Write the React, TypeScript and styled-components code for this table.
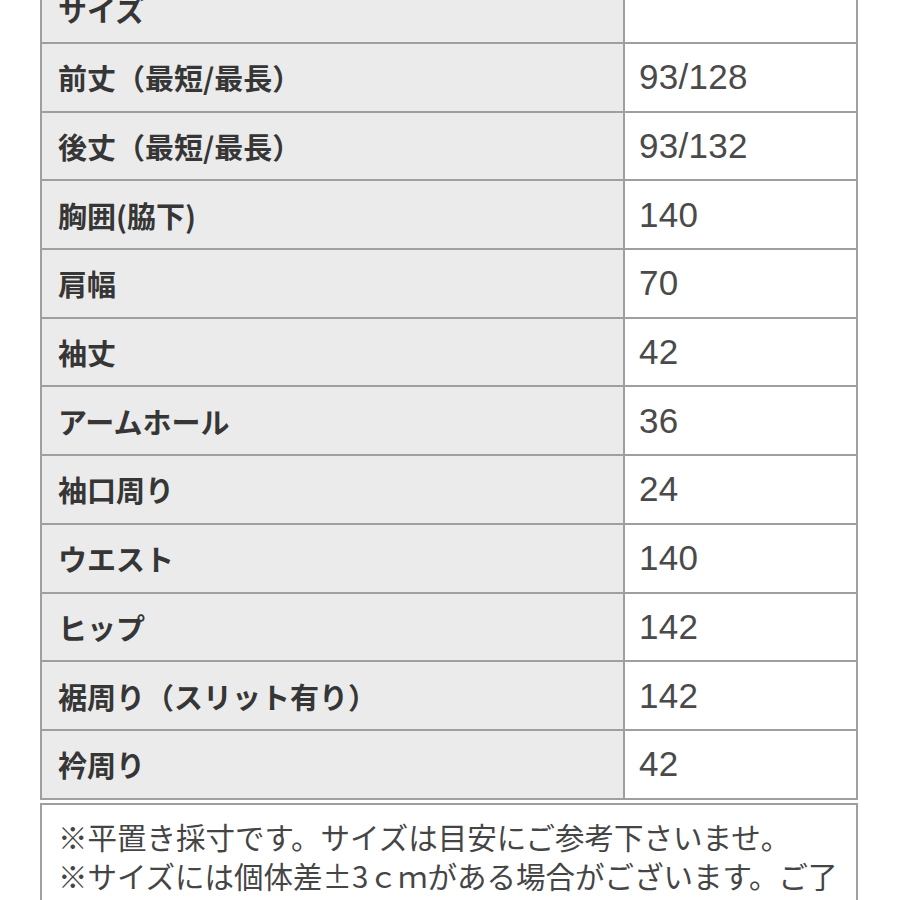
import React from 'react';
import styled, {createGlobalStyle} from 'styled-components';

const GlobalStyle = createGlobalStyle`
  html, body {
    margin: 0;
    padding: 0;
    background: #fff;
    overflow: hidden;
  }
  body {
    font-family: "Noto Sans CJK JP", "Noto Sans", sans-serif;
  }
`;

const Page = styled.div`
  width: 900px;
  height: 900px;
  overflow: hidden;
`;

const SizeTable = styled.div`
  display: grid;
  grid-template-columns: 581px 231px;
  grid-auto-rows: 66.7px;
  gap: 2px;
  padding: 2px;
  margin: -26.7px 0 0 40px;
  width: 818px;
  box-sizing: border-box;
  background: #9f9f9f;
`;

const LabelCell = styled.div`
  display: flex;
  align-items: center;
  padding-left: 16px;
  background: #ebebeb;
  color: #363636;
  font-size: 29px;
  font-weight: 700;
  white-space: nowrap;
`;

const ValueCell = styled.div`
  display: flex;
  align-items: center;
  padding-left: 14px;
  background: #fff;
  color: #4a4a4a;
  font-family: "Liberation Sans", Arial, sans-serif;
  font-size: 35px;
  letter-spacing: 0.3px;
`;

const NoteBox = styled.div`
  margin: 3px 0 0 40px;
  width: 818px;
  box-sizing: border-box;
  border: 2px solid #9f9f9f;
  background: #fff;
  padding: 12px 16px;
  color: #454545;
  font-size: 29.5px;
  line-height: 39px;
`;

const NoteLine = styled.div`
  white-space: nowrap;
`;

interface Row {
  label: string;
  value: string;
}

const rows: Row[] = [
  {label: 'サイズ', value: ''},
  {label: '前丈（最短/最長）', value: '93/128'},
  {label: '後丈（最短/最長）', value: '93/132'},
  {label: '胸囲(脇下)', value: '140'},
  {label: '肩幅', value: '70'},
  {label: '袖丈', value: '42'},
  {label: 'アームホール', value: '36'},
  {label: '袖口周り', value: '24'},
  {label: 'ウエスト', value: '140'},
  {label: 'ヒップ', value: '142'},
  {label: '裾周り（スリット有り）', value: '142'},
  {label: '衿周り', value: '42'},
];

const notes = [
  '※平置き採寸です。サイズは目安にご参考下さいませ。',
  '※サイズには個体差±3ｃｍがある場合がございます。ご了',
  '承の上、お買い求め下さいませ。',
];

export default function App() {
  return (
    <Page>
      <GlobalStyle />
      <SizeTable>
        {rows.map(row => (
          <React.Fragment key={row.label}>
            <LabelCell>{row.label}</LabelCell>
            <ValueCell>{row.value}</ValueCell>
          </React.Fragment>
        ))}
      </SizeTable>
      <NoteBox>
        {notes.map(line => (
          <NoteLine key={line}>{line}</NoteLine>
        ))}
      </NoteBox>
    </Page>
  );
}
